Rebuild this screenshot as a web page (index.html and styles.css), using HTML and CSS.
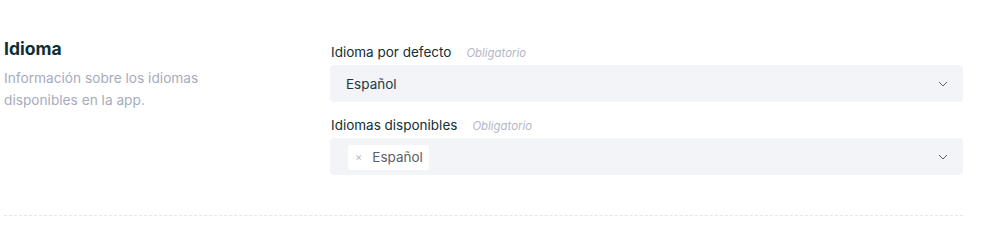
FILE: index.html
```html
<!DOCTYPE html>
<html lang="es">
<head>
<meta charset="utf-8">
<title>Idioma</title>
<link rel="stylesheet" href="styles.css">
</head>
<body>
<section class="section">
  <div class="info">
    <h2 class="title">Idioma</h2>
    <p class="desc">Información sobre los idiomas disponibles en la app.</p>
  </div>
  <div class="fields">
    <div class="field">
      <div class="label-row"><span class="label">Idioma por defecto</span><span class="req">Obligatorio</span></div>
      <div class="select">
        <span class="value">Español</span>
        <svg class="chev" width="10" height="6" viewBox="0 0 10 6"><path d="M1 1l4 4 4-4" fill="none" stroke="#52666b" stroke-width="1"/></svg>
      </div>
    </div>
    <div class="field">
      <div class="label-row"><span class="label">Idiomas disponibles</span><span class="req">Obligatorio</span></div>
      <div class="select multi">
        <span class="tag"><span class="tag-x">×</span><span class="tag-text">Español</span></span>
        <svg class="chev" width="10" height="6" viewBox="0 0 10 6"><path d="M1 1l4 4 4-4" fill="none" stroke="#52666b" stroke-width="1"/></svg>
      </div>
    </div>
  </div>
</section>
</body>
</html>
```
FILE: styles.css
```css
* { box-sizing: border-box; }
body {
  margin: 0;
  background: #ffffff;
  font-family: Inter, "Noto Sans", sans-serif;
  color: #1b3a3f;
}
.section {
  display: grid;
  grid-template-columns: 326px 633px;
  margin: 0 27px 0 4px;
  padding: 37px 0 40px 0;
  border-bottom: 1px dashed #e4e6ec;
}
.title {
  margin: 0;
  font-size: 17.5px;
  font-weight: 700;
  line-height: 24px;
  color: #0e3035;
}
.desc {
  margin: 6px 0 0 0;
  width: 225px;
  font-size: 13.7px;
  line-height: 22px;
  color: #a7abbd;
}
.fields {
  display: flex;
  flex-direction: column;
  gap: 13px;
  padding-top: 5px;
}
.field {
  display: flex;
  flex-direction: column;
  gap: 3px;
}
.label-row {
  display: flex;
  align-items: baseline;
  gap: 15px;
  height: 20px;
  line-height: 20px;
  padding-left: 1px;
}
.label {
  font-size: 13.5px;
  color: #132f34;
}
.req {
  font-size: 11.4px;
  font-style: italic;
  color: #b3b6c6;
}
.select {
  display: flex;
  align-items: center;
  justify-content: space-between;
  height: 37px;
  padding: 0 15px 0 16px;
  background: #f3f4f8;
  border-radius: 4px;
}
.select.multi { padding-left: 18px; }
.value {
  font-size: 13.5px;
  color: #1c3a3f;
}
.chev { display: block; margin-top: 1px; }
.tag {
  display: flex;
  align-items: center;
  height: 25px;
  padding: 0 6px 0 7px;
  background: #ffffff;
  border-radius: 3px;
  margin-top: 1px;
}
.tag-x {
  font-size: 11px;
  color: #b8bac4;
  margin-right: 10px;
}
.tag-text {
  font-size: 13.5px;
  color: #5b5f66;
}
```
